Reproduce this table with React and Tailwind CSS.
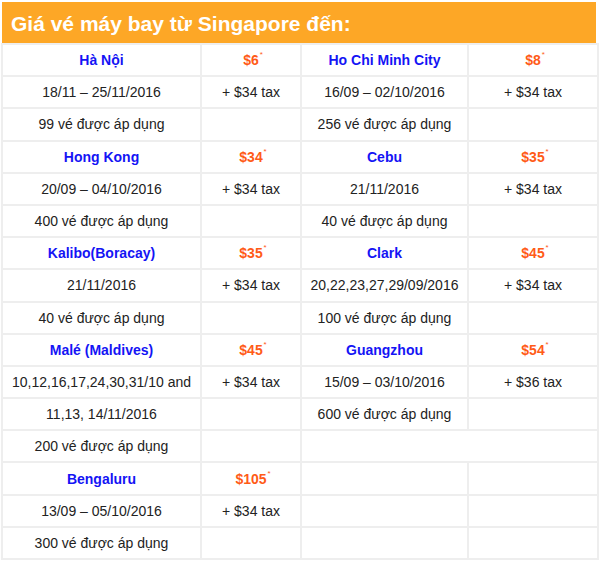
const rows = [
  { left: ["Hà Nội", "$6"], right: ["Ho Chi Minh City", "$8"] },
  { left: ["18/11 – 25/11/2016", "+ $34 tax"], right: ["16/09 – 02/10/2016", "+ $34 tax"] },
  { left: ["99 vé được áp dụng", ""], right: ["256 vé được áp dụng", ""] },
  { left: ["Hong Kong", "$34"], right: ["Cebu", "$35"] },
  { left: ["20/09 – 04/10/2016", "+ $34 tax"], right: ["21/11/2016", "+ $34 tax"] },
  { left: ["400 vé được áp dụng", ""], right: ["40 vé được áp dụng", ""] },
  { left: ["Kalibo(Boracay)", "$35"], right: ["Clark", "$45"] },
  { left: ["21/11/2016", "+ $34 tax"], right: ["20,22,23,27,29/09/2016", "+ $34 tax"] },
  { left: ["40 vé được áp dụng", ""], right: ["100 vé được áp dụng", ""] },
  { left: ["Malé (Maldives)", "$45"], right: ["Guangzhou", "$54"] },
  { left: ["10,12,16,17,24,30,31/10 and", "+ $34 tax"], right: ["15/09 – 03/10/2016", "+ $36 tax"] },
  { left: ["11,13, 14/11/2016", ""], right: ["600 vé được áp dụng", ""] },
  { left: ["200 vé được áp dụng", ""], right: null },
  { left: ["Bengaluru", "$105"], right: ["", ""] },
  { left: ["13/09 – 05/10/2016", "+ $34 tax"], right: ["", ""] },
  { left: ["300 vé được áp dụng", ""], right: ["", ""] },
];

// rows where the destination name + price sit
const leftHeads = [0, 3, 6, 9, 13];
const rightHeads = [0, 3, 6, 9];

function Price({ value }) {
  return (
    <span className="font-bold text-[#ff5b17] relative">
      {value}
      <span className="absolute -right-[4px] -top-[1px] text-[8px] font-normal leading-none">*</span>
    </span>
  );
}

function Cell({ text, head, price, span }) {
  return (
    <td
      colSpan={span}
      className="h-[32.2px] border-2 border-[#eeeeee] text-center align-middle p-0"
    >
      {head ? (
        <span className="font-bold text-[#1414f5]">{text}</span>
      ) : price ? (
        <Price value={text} />
      ) : (
        <span className="text-[#222222]">{text}</span>
      )}
    </td>
  );
}

export default function App() {
  return (
    <div className="w-[600px] h-[563px] bg-white pl-[2px] pt-[2px] font-['Liberation_Sans',Arial,sans-serif] text-[14px] leading-none">
      <div className="w-[594px] h-[42px] bg-[#fda726] flex items-center pl-[9px]">
        <h1 className="text-white font-bold text-[21px]">
          Giá vé máy bay từ Singapore đến:
        </h1>
      </div>
      <table className="w-[596px] border-collapse -ml-[1px] -mt-[1px] table-fixed">
        <colgroup>
          <col className="w-[199px]" />
          <col className="w-[100px]" />
          <col className="w-[167px]" />
          <col className="w-[130px]" />
        </colgroup>
        <tbody>
          {rows.map((r, i) => {
            const isHeadL = leftHeads.includes(i);
            const isHeadR = rightHeads.includes(i);
            return (
              <tr key={i}>
                <Cell text={r.left[0]} head={isHeadL} />
                <Cell text={r.left[1]} price={isHeadL} />
                {r.right ? (
                  <>
                    <Cell text={r.right[0]} head={isHeadR} />
                    <Cell text={r.right[1]} price={isHeadR} />
                  </>
                ) : (
                  <Cell text="" span={2} />
                )}
              </tr>
            );
          })}
        </tbody>
      </table>
    </div>
  );
}
